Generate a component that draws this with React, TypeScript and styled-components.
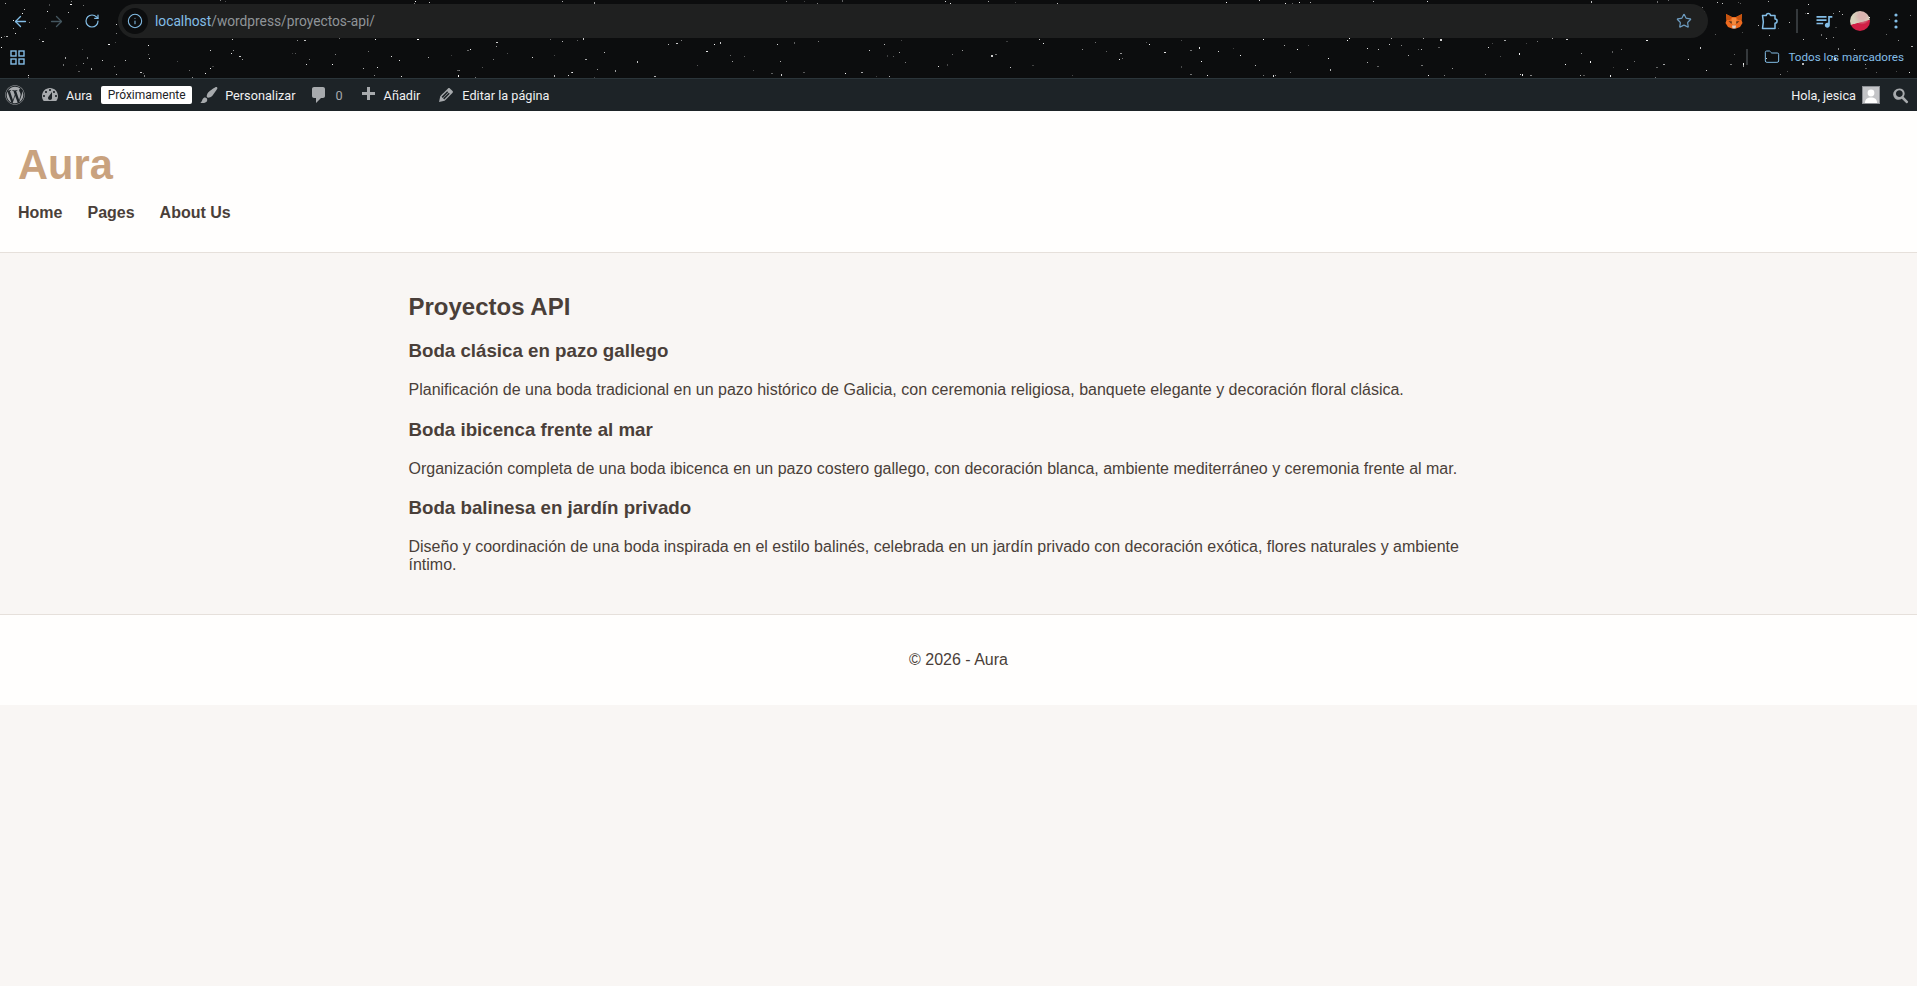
import * as React from "react";
import styled, { createGlobalStyle } from "styled-components";
import { ArrowLeft, ArrowRight, RotateCw, Info, Star, Folder } from "lucide-react";
import { FaWordpress } from "react-icons/fa";
import { MdOutlineQueueMusic } from "react-icons/md";

const GlobalStyle = createGlobalStyle`
  html, body {
    margin: 0;
    padding: 0;
    background: #f9f6f4;
    overflow: hidden;
  }
  body {
    font-family: "Liberation Sans", Arial, sans-serif;
    color: #4a3f39;
  }
`;

// random-looking but stable star dots for the browser theme
function makeStars(count: number) {
  let seed = 73;
  const next = () => {
    seed = (seed * 16807) % 2147483647;
    return seed / 2147483647;
  };
  const stars = [];
  for (let i = 0; i < count; i++) {
    stars.push({
      x: Math.round(next() * 1917),
      y: Math.round(next() * 78),
      w: next() > 0.8 ? 2 : 1,
      h: next() > 0.85 ? 2 : 1,
      o: 0.2 + next() * 0.8,
    });
  }
  return stars;
}

function Starfield() {
  const stars = React.useMemo(() => makeStars(480), []);
  return (
    <StarSvg width="1917" height="78" viewBox="0 0 1917 78">
      {stars.map((s, i) => (
        <rect key={i} x={s.x} y={s.y} width={s.w} height={s.h} fill="#fff" opacity={s.o} />
      ))}
    </StarSvg>
  );
}

function FoxIcon() {
  return (
    <svg width="18" height="18" viewBox="0 0 18 18">
      <polygon points="1,2 7,5 11,5 17,2 16.500,8 17.500,11 15,15 11,16.500 7,16.500 3,15 0.500,11 1.500,8" fill="#ee6a1f" />
      <polygon points="1,2 7,5 5,8 1.500,8" fill="#c9540f" />
      <polygon points="17,2 11,5 13,8 16.500,8" fill="#c9540f" />
      <polygon points="7,6 11,6 12,11 9,13 6,11" fill="#f58a3c" />
      <polygon points="3.500,9 7,9.500 6.500,12" fill="#5a3418" />
      <polygon points="14.500,9 11,9.500 11.500,12" fill="#5a3418" />
      <polygon points="7,13.500 11,13.500 10.500,16.500 7.500,16.500" fill="#d9cfc6" />
    </svg>
  );
}

function PuzzleIcon() {
  return (
    <svg width="20" height="20" viewBox="0 0 20 20" fill="none" stroke="#83bde6" strokeWidth="1.5" strokeLinejoin="round">
      <path d="M2.500 4.500H6.300a2.100 2.100 0 0 1 4.200 0H15V8a2.100 2.100 0 0 1 0 4.200V17.500H2.500Q4.200 11 2.500 4.500z" />
    </svg>
  );
}

function AppsIcon() {
  return (
    <svg width="15" height="15" viewBox="0 0 15 15" fill="none" stroke="#83bde6" strokeWidth="1.4">
      <rect x="1" y="1" width="5" height="5" />
      <rect x="9" y="1" width="5" height="5" />
      <rect x="1" y="9" width="5" height="5" />
      <rect x="9" y="9" width="5" height="5" />
    </svg>
  );
}

function KebabIcon() {
  return (
    <svg width="4" height="16" viewBox="0 0 4 16" fill="#83bde6">
      <circle cx="2" cy="2" r="1.6" />
      <circle cx="2" cy="8" r="1.6" />
      <circle cx="2" cy="14" r="1.6" />
    </svg>
  );
}

function BarIcon({ d, size = 20, fill = "#a7aaad" }: { d: string; size?: number; fill?: string }) {
  return (
    <svg width={size} height={size} viewBox="0 0 20 20" fill={fill}>
      <path d={d} fillRule="evenodd" />
    </svg>
  );
}

const dashboardPath =
  "M3.76 16h12.48c1.1-1.37 1.76-3.11 1.76-5 0-4.42-3.58-8-8-8s-8 3.58-8 8c0 1.89.66 3.63 1.76 5zM10 4c.55 0 1 .45 1 1s-.45 1-1 1-1-.45-1-1 .45-1 1-1zM6 6c.55 0 1 .45 1 1s-.45 1-1 1-1-.45-1-1 .45-1 1-1zm8 0c.55 0 1 .45 1 1s-.45 1-1 1-1-.45-1-1 .45-1 1-1zm-5.37 5.55L12 7v6c0 1.1-.9 2-2 2s-2-.9-2-2c0-.57.24-1.08.63-1.45zM4 10c.55 0 1 .45 1 1s-.45 1-1 1-1-.45-1-1 .45-1 1-1zm12 0c.55 0 1 .45 1 1s-.45 1-1 1-1-.45-1-1 .45-1 1-1z";
const brushPath =
  "M18.33 3.57s.27-.8-.31-1.36c-.53-.52-1.22-.24-1.22-.24-.61.3-5.76 3.47-7.67 5.57-.86.96-2.06 3.79-1.09 4.82.92.98 3.96-.17 4.79-1 2.06-2.06 5.21-7.17 5.5-7.79zM1.4 17.65c2.37-1.56 1.46-3.41 3.23-4.64.93-.65 2.22-.62 3.08.29.63.67.8 2.57-.16 3.46-1.57 1.45-4 1.55-6.15.89z";
const commentPath =
  "M5 2h9c1.1 0 2 .9 2 2v7c0 1.1-.9 2-2 2h-2l-5 5v-5H5c-1.1 0-2-.9-2-2V4c0-1.1.9-2 2-2z";
const plusPath = "M17 7v3h-5v5H9v-5H4V7h5V2h3v5h5z";
const editPath =
  "M13.89 3.39l2.71 2.72c.46.46.42 1.24.03 1.64l-8.01 8.02-5.56 1.16 1.16-5.58s7.6-7.63 7.99-8.03c.39-.39 1.22-.39 1.68.07zm-2.73 2.79l-5.59 5.61 1.11 1.11 5.54-5.65zm-2.97 8.23l5.58-5.6-1.07-1.08-5.59 5.6z";
const searchPath =
  "M12.14 4.78c1.95 1.95 2.07 4.99.45 7.06l4.3 4.3c.34.34.34.9 0 1.24l-.55.55c-.34.34-.9.34-1.24 0l-4.3-4.3c-2.07 1.62-5.11 1.5-7.06-.45-2.1-2.1-2.1-5.5 0-7.6s5.5-2.9 8.4-.8zm-1.4 1.4c-1.32-1.32-3.46-1.32-4.78 0s-1.32 3.46 0 4.78 3.46 1.32 4.78 0 1.32-3.46 0-4.78z";

export default function App() {
  return (
    <>
      <GlobalStyle />
      <Browser>
        <Starfield />
        <Toolbar>
          <NavButton>
            <ArrowLeft size={17} color="#83bde6" strokeWidth={1.8} />
          </NavButton>
          <NavButton>
            <ArrowRight size={17} color="#44565f" strokeWidth={1.8} />
          </NavButton>
          <NavButton>
            <RotateCw size={16} color="#83bde6" strokeWidth={1.8} />
          </NavButton>
          <AddressPill>
            <InfoBadge>
              <Info size={16} color="#83bde6" strokeWidth={1.6} />
            </InfoBadge>
            <UrlText>
              <UrlHost>localhost</UrlHost>/wordpress/proyectos-api/
            </UrlText>
            <Star size={16} color="#6d9cc0" strokeWidth={1.8} />
          </AddressPill>
          <NavButton>
            <FoxIcon />
          </NavButton>
          <NavButton>
            <PuzzleIcon />
          </NavButton>
          <ToolbarSeparator />
          <NavButton>
            <MdOutlineQueueMusic size={20} color="#83bde6" />
          </NavButton>
          <NavButton>
            <ProfilePic />
          </NavButton>
          <NavButton>
            <KebabIcon />
          </NavButton>
        </Toolbar>
        <BookmarkBar>
          <AppsIcon />
          <BookmarksRight>
            <BookmarkSeparator />
            <Folder size={16} color="#83bde6" strokeWidth={1.5} />
            <BookmarkLabel>Todos los marcadores</BookmarkLabel>
          </BookmarksRight>
        </BookmarkBar>
      </Browser>

      <AdminBar>
        <AdminGroup>
          <LogoSlot>
            <FaWordpress size={20} color="#a7aaad" />
          </LogoSlot>
          <AdminItem $offset={10}>
            <BarIcon d={dashboardPath} />
            <AdminText>Aura</AdminText>
          </AdminItem>
          <SoonBadge>Próximamente</SoonBadge>
          <AdminItem $offset={7}>
            <BarIcon d={brushPath} />
            <AdminText>Personalizar</AdminText>
          </AdminItem>
          <AdminItem $offset={14}>
            <BarIcon d={commentPath} />
            <CommentCount>0</CommentCount>
          </AdminItem>
          <AdminItem $offset={15}>
            <BarIcon d={plusPath} />
            <AdminText>Añadir</AdminText>
          </AdminItem>
          <AdminItem $offset={16}>
            <BarIcon d={editPath} />
            <AdminText>Editar la página</AdminText>
          </AdminItem>
        </AdminGroup>
        <AdminGroup>
          <AdminText>Hola, jesica</AdminText>
          <UserAvatar>
            <svg width="16" height="16" viewBox="0 0 16 16" fill="#fff">
              <circle cx="8" cy="6" r="3.4" />
              <path d="M2 16c0-4 2.5-5.5 6-5.5s6 1.500 6 5.500z" />
            </svg>
          </UserAvatar>
          <SearchSlot>
            <BarIcon d={searchPath} />
          </SearchSlot>
        </AdminGroup>
      </AdminBar>

      <SiteHeader>
        <SiteTitle>Aura</SiteTitle>
        <SiteNav>
          <NavLink>Home</NavLink>
          <NavLink>Pages</NavLink>
          <NavLink>About Us</NavLink>
        </SiteNav>
      </SiteHeader>

      <Main>
        <PageTitle>Proyectos API</PageTitle>
        <ProjectTitle>Boda clásica en pazo gallego</ProjectTitle>
        <ProjectText>
          Planificación de una boda tradicional en un pazo histórico de Galicia, con ceremonia
          religiosa, banquete elegante y decoración floral clásica.
        </ProjectText>
        <ProjectTitle>Boda ibicenca frente al mar</ProjectTitle>
        <ProjectText>
          Organización completa de una boda ibicenca en un pazo costero gallego, con decoración
          blanca, ambiente mediterráneo y ceremonia frente al mar.
        </ProjectText>
        <ProjectTitle>Boda balinesa en jardín privado</ProjectTitle>
        <ProjectText>
          Diseño y coordinación de una boda inspirada en el estilo balinés, celebrada en un jardín
          privado con decoración exótica, flores naturales y ambiente íntimo.
        </ProjectText>
      </Main>

      <SiteFooter>© 2026 - Aura</SiteFooter>
    </>
  );
}

const Browser = styled.div`
  position: relative;
  height: 79px;
  box-sizing: border-box;
  background: #0c0d0e;
  border-bottom: 1px solid #2b353a;
  overflow: hidden;
`;

const StarSvg = styled.svg`
  position: absolute;
  inset: 0;
`;

const Toolbar = styled.div`
  position: relative;
  display: flex;
  align-items: center;
  height: 34px;
  padding: 4px 3px 4px 2px;
`;

const NavButton = styled.div`
  width: 36px;
  height: 34px;
  flex-shrink: 0;
  display: flex;
  align-items: center;
  justify-content: center;
`;

const AddressPill = styled.div`
  flex: 1;
  height: 34px;
  margin: 0 8px;
  display: flex;
  align-items: center;
  padding: 0 16px 0 4px;
  border-radius: 17px;
  background: #1f2020;
`;

const InfoBadge = styled.div`
  width: 26px;
  height: 26px;
  border-radius: 50%;
  background: #0c0d0e;
  display: flex;
  align-items: center;
  justify-content: center;
`;

const UrlText = styled.div`
  flex: 1;
  margin-left: 7px;
  font: 13.75px Roboto, sans-serif;
  color: #8f9498;
`;

const UrlHost = styled.span`
  color: #83bde6;
`;

const ToolbarSeparator = styled.div`
  width: 2px;
  height: 24px;
  margin: 0 8px;
  background: #35393c;
`;

const ProfilePic = styled.div`
  width: 20px;
  height: 20px;
  border-radius: 50%;
  background:
    radial-gradient(circle at 60% 25%, #d9b4b0 0 18%, transparent 45%),
    linear-gradient(165deg, #d8d3bd 0 54%, #d01f45 57% 100%);
`;

const BookmarkBar = styled.div`
  position: relative;
  display: flex;
  align-items: center;
  justify-content: space-between;
  height: 30px;
  padding: 0 13px 0 10px;
`;

const BookmarksRight = styled.div`
  display: flex;
  align-items: center;
`;

const BookmarkSeparator = styled.div`
  width: 2px;
  height: 16px;
  margin-right: 16px;
  background: #35393c;
`;

const BookmarkLabel = styled.span`
  margin-left: 8px;
  font: 11.65px Roboto, sans-serif;
  color: #83bde6;
`;

const AdminBar = styled.div`
  display: flex;
  align-items: center;
  justify-content: space-between;
  height: 32px;
  background: #1d2327;
`;

const AdminGroup = styled.div`
  display: flex;
  align-items: center;
`;

const LogoSlot = styled.div`
  width: 30px;
  display: flex;
  justify-content: center;
`;

const AdminItem = styled.div<{ $offset: number }>`
  display: flex;
  align-items: center;
  gap: 6px;
  margin-left: ${(props) => props.$offset}px;
`;

const AdminText = styled.span`
  font: 12.7px Roboto, sans-serif;
  color: #f0f0f1;
`;

const CommentCount = styled.span`
  font: 12.7px Roboto, sans-serif;
  color: #a7aaad;
`;

const SoonBadge = styled.span`
  margin-left: 9px;
  width: 91px;
  height: 18px;
  background: #fff;
  border-radius: 2px;
  text-align: center;
  font: 12px/18px Roboto, sans-serif;
  color: #1d2327;
`;

const UserAvatar = styled.div`
  width: 16px;
  height: 16px;
  margin-left: 6px;
  background: #c3c4c7;
  border: 1px solid #8c8f94;
  overflow: hidden;
`;

const SearchSlot = styled.div`
  width: 26px;
  margin: 0 3px 0 8px;
  display: flex;
  justify-content: center;
`;

const SiteHeader = styled.header`
  background: #fffefd;
  border-bottom: 1px solid #e6e0db;
  padding: 30px 18px 30px;
`;

const SiteTitle = styled.div`
  font-size: 41.6px;
  line-height: 48px;
  font-weight: 700;
  color: #c9a27e;
`;

const SiteNav = styled.nav`
  display: flex;
  gap: 25px;
  margin-top: 15px;
`;

const NavLink = styled.a`
  font-size: 16px;
  font-weight: 700;
  color: #4a3f39;
`;

const Main = styled.main`
  width: 1100px;
  margin: 0 auto;
  padding: 40px 0;
`;

const PageTitle = styled.h2`
  margin: 0 0 19px;
  font-size: 24px;
  color: #4a3f39;
`;

const ProjectTitle = styled.h3`
  margin: 19.2px 0;
  font-size: 18.72px;
  line-height: 22px;
  color: #4a3f39;
`;

const ProjectText = styled.p`
  margin: 16px 0;
  font-size: 16px;
  color: #4a3f39;

  &:last-child {
    margin-bottom: 0;
  }
`;

const SiteFooter = styled.footer`
  background: #fffefd;
  border-top: 1px solid #e6e0db;
  padding: 36px 0;
  text-align: center;
  font-size: 16px;
  color: #4a3f39;
`;
